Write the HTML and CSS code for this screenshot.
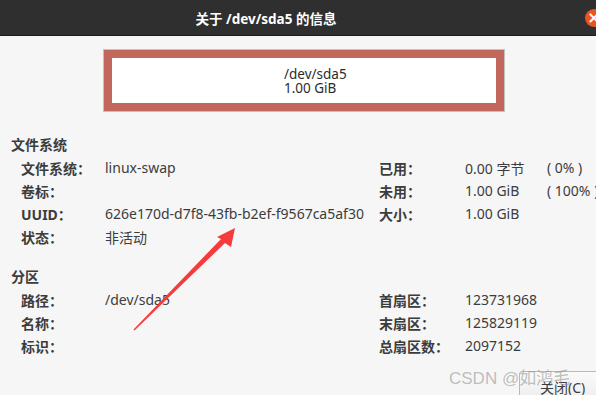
FILE: index.html
```html
<!DOCTYPE html>
<html lang="zh-CN">
<head>
    <meta charset="UTF-8">
    <title>关于 /dev/sda5 的信息</title>
    <link rel="stylesheet" href="styles.css">
</head>
<body>

    <!-- Title bar -->
    <div class="titlebar">
        <span class="title">关于 /dev/sda5 的信息</span>
        <span class="close-btn">&times;</span>
    </div>

    <div class="content">

        <!-- Partition graphic -->
        <div class="disk-map">
            <div class="partition">
                <div class="part-text">
                    <div>/dev/sda5</div>
                    <div>1.00 GiB</div>
                </div>
            </div>
        </div>

        <!-- File system -->
        <h3 class="section-title">文件系统</h3>
        <div class="info-grid">
            <span class="label">文件系统：</span><span>linux-swap</span>
            <span class="label">已用：</span><span>0.00 字节</span><span>( 0% )</span>

            <span class="label">卷标：</span><span></span>
            <span class="label">未用：</span><span>1.00 GiB</span><span>( 100% )</span>

            <span class="label">UUID：</span><span>626e170d-d7f8-43fb-b2ef-f9567ca5af30</span>
            <span class="label">大小：</span><span>1.00 GiB</span><span></span>

            <span class="label">状态：</span><span>非活动</span>
            <span></span><span></span><span></span>
        </div>

        <!-- Partition -->
        <h3 class="section-title part-title">分区</h3>
        <div class="info-grid">
            <span class="label">路径：</span><span>/dev/sda5</span>
            <span class="label">首扇区：</span><span>123731968</span><span></span>

            <span class="label">名称：</span><span></span>
            <span class="label">末扇区：</span><span>125829119</span><span></span>

            <span class="label">标识：</span><span></span>
            <span class="label">总扇区数：</span><span>2097152</span><span></span>
        </div>

        <div class="actions">
            <button class="btn">关闭(C)</button>
        </div>
    </div>

    <!-- annotation arrow -->
    <svg class="arrow" width="596" height="395" viewBox="0 0 596 395">
        <polygon points="235,228 231,247 225,243 134.5,330.5 133.5,329.5 221,239 217,237" fill="#f53b3b"/>
    </svg>

    <div class="watermark">CSDN @如鸿毛</div>

</body>
</html>
```

FILE: styles.css
```css
/* Reset */
* {
    margin: 0;
    padding: 0;
    box-sizing: border-box;
}

html, body {
    width: 596px;
    height: 395px;
    overflow: hidden;
}

body {
    background-color: #f6f6f6;
    color: #3c3c3c;
    font-family: "Noto Sans", "Noto Sans CJK SC", sans-serif;
    font-size: 14px;
    position: relative;
}

/* Title bar */
.titlebar {
    display: flex;
    align-items: center;
    height: 36px;
    background-color: #2f2f2f;
    border-bottom: 1px solid #1b1b1b;
}

.title {
    flex: 1;
    padding-right: 53px;
    text-align: center;
    color: #ffffff;
    font-weight: bold;
    font-size: 13.5px;
}

.close-btn {
    width: 18px;
    height: 18px;
    margin-right: -7px;
    border-radius: 50%;
    background-color: #e9541f;
    color: #ffffff;
    font-size: 16px;
    font-weight: bold;
    line-height: 18px;
    text-align: center;
    font-family: "DejaVu Sans", sans-serif;
}

/* Content */
.content {
    padding: 13px 0 0 11px;
}

.disk-map {
    width: 402px;
    height: 63px;
    margin-left: 92px;
    border: 1px solid #c2c2c2;
}

.partition {
    height: 100%;
    border: 8px solid #c1675b;
    background-color: #ffffff;
    display: flex;
    align-items: center;
}

.part-text {
    padding-left: 172px;
    line-height: 14px;
    font-size: 13.5px;
    color: #2c2c2c;
}

.section-title {
    font-size: 14px;
    font-weight: bold;
    line-height: 23px;
    margin-top: 21px;
}

.part-title {
    margin-top: 17px;
}

.info-grid {
    display: grid;
    grid-template-columns: 84px 274px 86px 82px auto;
    grid-auto-rows: 23px;
    align-items: center;
    padding-left: 10px;
    white-space: nowrap;
}

.label {
    font-weight: bold;
}

/* Dialog buttons */
.actions {
    padding: 14px 0 0 508px;
}

.btn {
    width: 92px;
    height: 32px;
    padding-left: 20px;
    text-align: left;
    border: 1px solid #b9b9b9;
    border-radius: 3px;
    background: linear-gradient(#fafafa, #ececec);
    color: #3c3c3c;
    font-family: "Noto Sans", "Noto Sans CJK SC", sans-serif;
    font-size: 14px;
}

/* Overlays */
.arrow {
    position: absolute;
    left: 0;
    top: 0;
}

.watermark {
    position: absolute;
    left: 449px;
    top: 364px;
    font-family: "Liberation Sans", "Noto Sans CJK SC", sans-serif;
    font-size: 17px;
    color: rgba(140, 140, 140, 0.55);
    white-space: nowrap;
}
```
